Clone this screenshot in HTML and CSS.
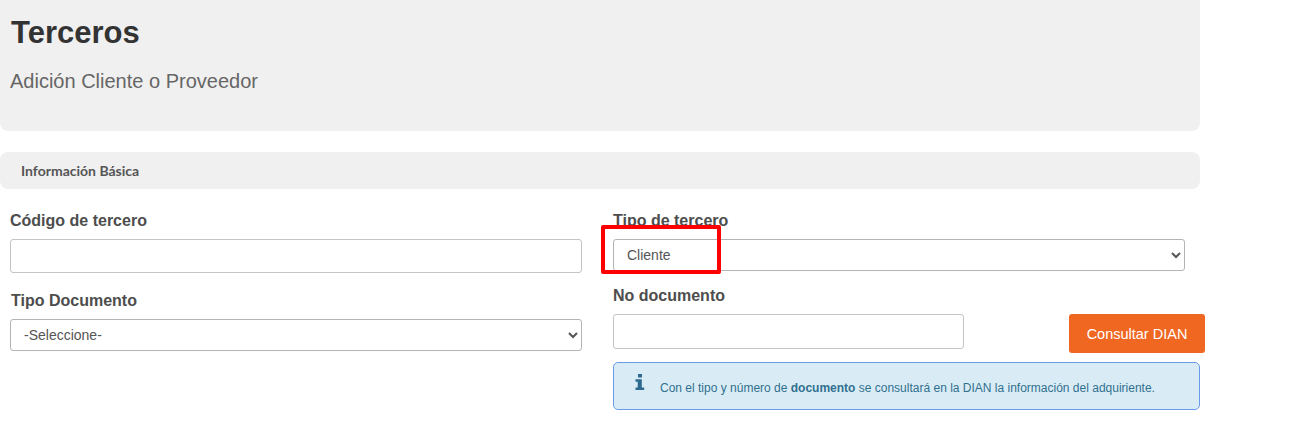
FILE: index.html
```html
<!DOCTYPE html>
<html lang="es">
<head>
<meta charset="utf-8">
<title>Terceros</title>
<link rel="stylesheet" href="styles.css">
</head>
<body>
<div class="page">
  <header class="hero">
    <h1>Terceros</h1>
    <p>Adición Cliente o Proveedor</p>
  </header>
  <div class="section-bar">Información Básica</div>
  <form class="form">
    <div class="col col-left">
      <div class="field field-code">
        <label for="codigo">Código de tercero</label>
        <input id="codigo" class="control input-tall" type="text">
      </div>
      <div class="field field-doc">
        <label class="label-inset" for="tipodoc">Tipo Documento</label>
        <select id="tipodoc" class="control select"><option>-Seleccione-</option></select>
      </div>
    </div>
    <div class="col col-right">
      <div class="field field-type">
        <label for="tipo">Tipo de tercero</label>
        <select id="tipo" class="control select"><option>Cliente</option></select>
        <span class="highlight"></span>
      </div>
      <div class="field field-no">
        <label for="nodoc">No documento</label>
        <div class="doc-row">
          <input id="nodoc" class="control input-doc" type="text">
          <button class="btn" type="button">Consultar DIAN</button>
        </div>
      </div>
      <div class="alert">
        <svg class="info" viewBox="0 0 10 16" width="10" height="16" aria-hidden="true"><path d="M3 0h4v3.4H3zM0.5 5.2h6.3v8.2h2.4V16H0.5v-2.6h2.2V7.8H0.5z"/></svg>
        <span>Con el tipo y número de <b>documento</b> se consultará en la DIAN la información del adquiriente.</span>
      </div>
    </div>
  </form>
</div>
</body>
</html>
```
FILE: styles.css
```css
* { box-sizing: border-box; }
html, body { margin: 0; background: #fff; }
body { font-family: "Liberation Sans", Arial, sans-serif; color: #4d4d4d; height: 442px; overflow: hidden; }
.page { width: 1298px; }
.hero {
  width: 1200px; height: 131px; background: #f0f0f0;
  border-radius: 0 0 8px 8px; padding: 14px 10px 0;
}
.hero h1 { margin: 0 0 0 1px; font-size: 31px; line-height: 38px; font-weight: 700; color: #333; }
.hero p { margin: 18px 0 0; font-size: 20px; line-height: 23px; color: #666; }
.section-bar {
  width: 1200px; height: 37px; margin-top: 21px; background: #f0f0f0;
  border-radius: 8px; padding: 0 21px;
  font: 700 14px/37px Lato, sans-serif; color: #555;
}
.form { display: flex; padding-left: 10px; }
.col-left { width: 572px; }
.col-right { width: 592px; margin-left: 31px; }
.field { position: relative; }
label { display: block; font-size: 16px; line-height: 18px; font-weight: 700; color: #4d4d4d; }
.label-inset { margin-left: 1px; }
.control {
  display: block; width: 100%; background: #fff;
  border: 1px solid #c4c4c4; border-radius: 3px;
  font: 14px "Liberation Sans", Arial, sans-serif; color: #555;
}
.select { height: 32px; padding: 0 9px; border-color: #b4b4b4; }
.field-code { padding-top: 23px; }
.field-code label { margin-bottom: 9px; }
.input-tall { height: 34px; }
.field-doc { padding-top: 19px; }
.field-doc label { margin-bottom: 9px; }
.field-type { padding-top: 23px; }
.field-type label { margin-bottom: 9px; }
.field-type .select { width: 572px; }
.field-no { padding-top: 16px; }
.field-no label { margin-bottom: 9px; }
.doc-row { display: flex; align-items: flex-start; justify-content: space-between; }
.input-doc { width: 351px; height: 35px; }
.btn {
  height: 39px; width: 136px; border: 0; border-radius: 3px;
  background: #f06722; color: #fff; font: 14.5px "Liberation Sans", Arial, sans-serif;
  margin-right: 0;
}
.highlight {
  position: absolute; left: -12px; top: 36px; width: 120px; height: 49px;
  border: 4px solid #f00; border-radius: 2px; pointer-events: none;
}
.alert {
  display: flex; align-items: flex-start; width: 587px; height: 48px; margin-top: 9px;
  background: #d9ecf5; border: 1px solid #6a9aec; border-radius: 5px;
  padding: 11px 0 0 21px; font-size: 12px; line-height: 29px; color: #31708f;
}
.alert span { margin-left: 15px; margin-top: -6px; padding-top: 6px; }
.alert b { font-weight: 700; }
.info { fill: #2e6a90; flex: none; }
```
